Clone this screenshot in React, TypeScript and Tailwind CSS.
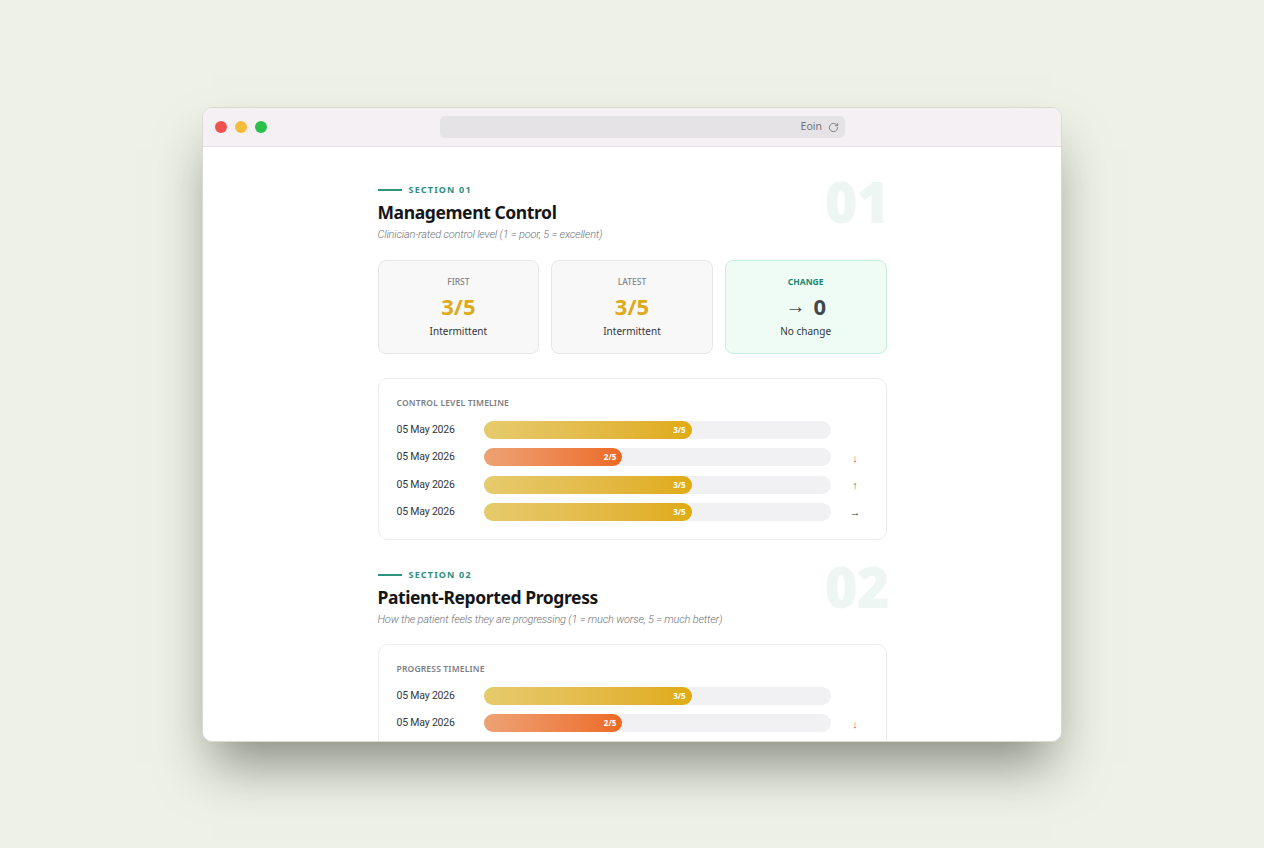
import { RotateCw } from 'lucide-react';

type Row = { date: string; score: number; trend?: 'up' | 'down' | 'flat' };

const controlRows: Row[] = [
  { date: '05 May 2026', score: 3 },
  { date: '05 May 2026', score: 2, trend: 'down' },
  { date: '05 May 2026', score: 3, trend: 'up' },
  { date: '05 May 2026', score: 3, trend: 'flat' },
];

const progressRows: Row[] = [
  { date: '05 May 2026', score: 3 },
  { date: '05 May 2026', score: 2, trend: 'down' },
  { date: '05 May 2026', score: 3, trend: 'up' },
  { date: '05 May 2026', score: 3, trend: 'flat' },
];

function SectionHead({ num, title, sub }: { num: string; title: string; sub: string }) {
  return (
    <div className="relative">
      <div className="flex items-center gap-[7px] h-[12px]">
        <div className="w-[24px] h-[2px] bg-[#2f9580]" />
        <span className="text-[9px] font-bold tracking-[0.13em] text-[#2f8f7c]">SECTION {num}</span>
      </div>
      <h2 className="mt-[4px] text-[17.5px] leading-[24px] font-bold tracking-[-0.4px] text-[#14161a]">{title}</h2>
      <p
        className="mt-[4px] text-[11px] leading-[14px] italic font-light text-[#6f7278] tracking-[-0.2px]"
        style={{ fontFamily: 'Roboto, sans-serif' }}
      >
        {sub}
      </p>
      <div className="absolute right-[-2px] top-[-11px] text-[56px] leading-none font-black text-[#edf6f2] tracking-[-1px] select-none">
        {num}
      </div>
    </div>
  );
}

function StatCard({ label, value, sub, accent }: { label: string; value: string; sub: string; accent?: boolean }) {
  return (
    <div
      className={
        'flex-1 h-[94px] rounded-[8px] border flex flex-col items-center pt-[15px] ' +
        (accent ? 'bg-[#effcf6] border-[#c7eedf]' : 'bg-[#f8f8f8] border-[#e7e7e9]')
      }
    >
      <div className={'text-[8.5px] leading-[12px] ' + (accent ? 'font-bold text-[#23876f]' : 'font-medium text-[#80838a]')}>
        {label}
      </div>
      <div
        className={
          'mt-[5px] text-[22px] leading-[26px] font-bold ' + (accent ? 'text-[#44484e]' : 'text-[#deaa1c]')
        }
      >
        {accent ? (
          <span className="flex items-center gap-[8px]">
            <span className="font-normal text-[20px]">→</span>0
          </span>
        ) : (
          value
        )}
      </div>
      <div className="mt-[5px] text-[10px] leading-[14px] text-[#33363b]">{sub}</div>
    </div>
  );
}

function Trend({ t }: { t?: Row['trend'] }) {
  if (t === 'down') return <span className="text-[#e2585a]">↓</span>;
  if (t === 'up') return <span className="text-[#2f9a6b]">↑</span>;
  if (t === 'flat') return <span className="text-[#33363b]">→</span>;
  return null;
}

function Timeline({ title, rows }: { title: string; rows: Row[] }) {
  return (
    <div className="rounded-[10px] border border-[#ececee] bg-white px-[18px] pt-[18px] pb-[18px]">
      <div className="text-[8.5px] leading-[12px] font-semibold text-[#7b7e85] tracking-[0.02em]">{title}</div>
      <div className="mt-[12px] flex flex-col gap-[9.3px]">
        {rows.map((r, i) => (
          <div key={i} className="flex items-center h-[18px]">
            <div className="w-[87px] text-[10.5px] text-[#34373c] tracking-[-0.2px]" style={{ fontFamily: 'Roboto, sans-serif' }}>
              {r.date}
            </div>
            <div className="w-[347px] h-[18px] rounded-full bg-[#f1f1f3]">
              <div
                className={
                  'h-full rounded-full flex items-center justify-end pr-[6px] ' +
                  (r.score === 2
                    ? 'bg-gradient-to-r from-[#eda274] to-[#ec6a22]'
                    : 'bg-gradient-to-r from-[#e6cb6c] to-[#e0ab0f]')
                }
                style={{ width: `${(r.score / 5) * 100}%` }}
              >
                <span className="text-[8px] font-bold text-white">{r.score}/5</span>
              </div>
            </div>
            <div className="flex-1 flex justify-center pl-[12px] text-[11px] leading-none">
              <Trend t={r.trend} />
            </div>
          </div>
        ))}
      </div>
    </div>
  );
}

export default function App() {
  return (
    <div
      className="w-[1264px] h-[848px] bg-[#eef1e6] flex justify-center pt-[107px] overflow-hidden"
      style={{ fontFamily: '"Noto Sans", "Open Sans", sans-serif' }}
    >
      <div className="w-[860px] h-[635px] rounded-[10px] bg-white overflow-hidden flex flex-col border border-[#dadcd4] shadow-[0_32px_50px_-10px_rgba(40,44,30,0.5)]">
        <div className="h-[39px] shrink-0 bg-[#f4f0f4] border-b border-[#e4e0e4] flex items-center px-[12px]">
          <div className="flex gap-[8px]">
            <div className="w-[12px] h-[12px] rounded-full bg-[#ef5350]" />
            <div className="w-[12px] h-[12px] rounded-full bg-[#f6bd3b]" />
            <div className="w-[12px] h-[12px] rounded-full bg-[#2bbf4c]" />
          </div>
          <div className="ml-[173px] w-[405px] h-[22px] rounded-[5px] bg-[#e6e3e6] flex items-center justify-end pr-[6px] gap-[6px]">
            <span className="text-[10.5px] text-[#707075]">Eoin</span>
            <RotateCw size={11} strokeWidth={1.8} className="text-[#707075]" />
          </div>
        </div>
        <div className="flex-1 overflow-hidden flex justify-center">
          <div className="w-[509px] pt-[37px]">
            <SectionHead num="01" title="Management Control" sub="Clinician-rated control level (1 = poor, 5 = excellent)" />
            <div className="mt-[18px] flex gap-[12px]">
              <StatCard label="FIRST" value="3/5" sub="Intermittent" />
              <StatCard label="LATEST" value="3/5" sub="Intermittent" />
              <StatCard label="CHANGE" value="0" sub="No change" accent />
            </div>
            <div className="mt-[24px]">
              <Timeline title="CONTROL LEVEL TIMELINE" rows={controlRows} />
            </div>
            <div className="mt-[29px]">
              <SectionHead
                num="02"
                title="Patient-Reported Progress"
                sub="How the patient feels they are progressing (1 = much worse, 5 = much better)"
              />
            </div>
            <div className="mt-[17px]">
              <Timeline title="PROGRESS TIMELINE" rows={progressRows} />
            </div>
          </div>
        </div>
      </div>
    </div>
  );
}
